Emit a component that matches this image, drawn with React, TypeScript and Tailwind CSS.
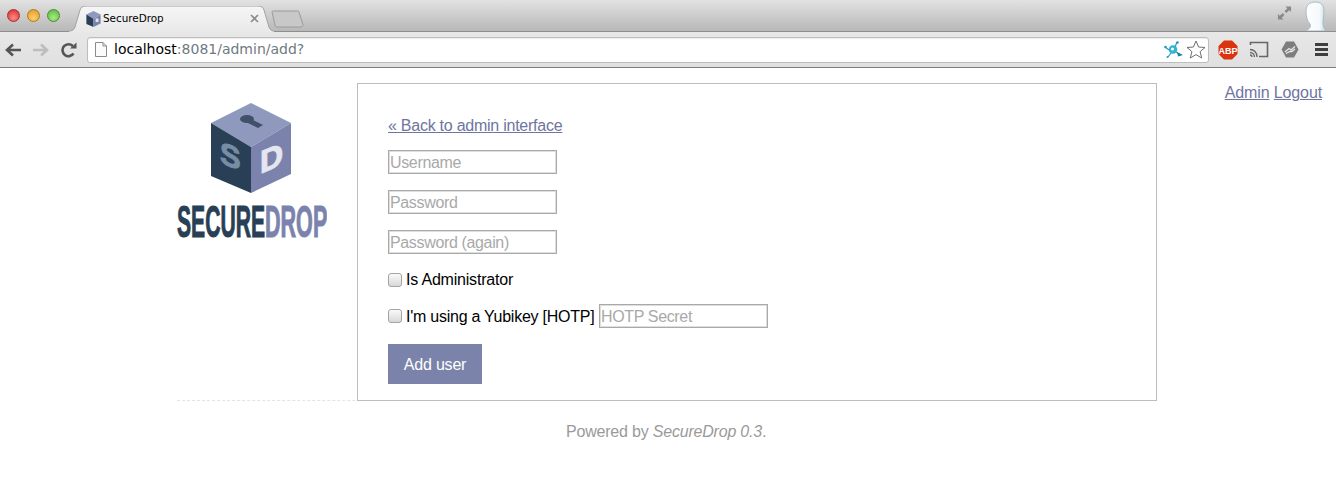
const sans = "font-['Liberation_Sans',Arial,sans-serif]";
const uiFont = "font-['DejaVu_Sans',sans-serif]";
const link = "text-[#6e75a0] underline";
const field =
  "block h-6 w-[169px] border border-[#a9a9a9] bg-white px-[1px] pt-[1px] text-[16px] tracking-[-0.35px] shadow-[inset_0_0_0_1px_#dedede] outline-none placeholder:text-[#a9a9a9]";
const checkbox =
  "h-[14px] w-[14px] rounded-[3px] border border-[#a4a4a4] bg-gradient-to-b from-[#fafafa] to-[#d8d8d8]";

const CubeFaces = () => (
  <>
    <polygon points="40,0 80,20 40,44 0,20" fill="#8f98bd" />
    <polygon points="0,20 40,44 40,90 0,73" fill="#293f55" />
    <polygon points="80,20 40,44 40,90 80,71" fill="#7b83ac" />
  </>
);

const CubeLogo = () => (
  <svg width="80" height="90" viewBox="0 0 80 90" className="mr-[2px]">
    <CubeFaces />
    <ellipse cx="36" cy="16" rx="7" ry="4" fill="#3f5168" />
    <polygon points="38,15 52,22 47,25 37,20" fill="#3f5168" />
    <text
      transform="matrix(1 0.36 0 1 9 60)"
      fontFamily="Liberation Sans"
      fontWeight="700"
      fontSize="31"
      fill="#768da5"
      stroke="#768da5"
      strokeWidth="1"
    >
      S
    </text>
    <text
      transform="matrix(1 -0.42 0 1 49 71)"
      fontFamily="Liberation Sans"
      fontWeight="700"
      fontSize="32"
      fill="#e4e6f0"
      stroke="#e4e6f0"
      strokeWidth="1"
    >
      D
    </text>
  </svg>
);

const WordMark = () => (
  <svg width="150" height="50" viewBox="0 0 150 50" className="mt-[4px]">
    <text
      transform="matrix(0.48 0 0 1 0 40)"
      fontFamily="Liberation Sans"
      fontWeight="700"
      fontSize="44"
      fill="#293f55"
      stroke="#293f55"
      strokeWidth="1.1"
    >
      SECURE
    </text>
    <text
      transform="matrix(0.49 0 0 1 88 40)"
      fontFamily="Liberation Sans"
      fontWeight="700"
      fontSize="44"
      fill="#7b83ac"
      stroke="#7b83ac"
      strokeWidth="1.1"
    >
      DROP
    </text>
  </svg>
);

const Light = ({ className }: { className: string }) => (
  <span className={`h-[13px] w-[13px] rounded-full border ${className}`} />
);

const Tab = () => (
  <div className="relative ml-[9px] flex h-[25px] w-[207px] items-center pl-[17px]">
    <svg className="absolute inset-0" width="207" height="26" viewBox="0 0 207 26">
      <defs>
        <linearGradient id="tabFill" x1="0" y1="0" x2="0" y2="1">
          <stop offset="0" stopColor="#f6f6f6" />
          <stop offset="1" stopColor="#e9e9e9" />
        </linearGradient>
      </defs>
      <path
        d="M0 25C3 25 5 24 6 21L11 4C12 1 14 0 17 0H189C192 0 194 1 195 4L200 21C201 24 203 25 205 25V26H0Z"
        fill="url(#tabFill)"
      />
      <path
        d="M0 25C3 25 5 24 6 21L11 4C12 1 14 0 17 0H189C192 0 194 1 195 4L200 21C201 24 203 25 205 25"
        fill="none"
        stroke="#a2a2a2"
      />
    </svg>
    <svg width="15" height="16" viewBox="0 0 80 90" className="relative shrink-0">
      <CubeFaces />
      <rect x="52" y="42" width="16" height="20" fill="#dfe2ee" />
    </svg>
    <span className={`relative ml-[2px] text-[10.4px] text-black ${uiFont}`}>SecureDrop</span>
    <svg width="9" height="9" viewBox="0 0 9 9" className="relative ml-[86px]">
      <path d="M1 1l7 7M8 1L1 8" stroke="#8a8a8a" strokeWidth="1.6" />
    </svg>
  </div>
);

const NewTab = () => (
  <svg width="33" height="18" viewBox="0 0 33 18" className="mb-[3px] -ml-[5px]">
    <path
      d="M1 2C1 1 2 1 3 1H26C27 1 28 1 28 2L32 15C32 16 31 17 30 17H6C5 17 4 16 4 15Z"
      fill="#c8c8c8"
      stroke="#9b9b9b"
    />
  </svg>
);

const Avatar = () => (
  <svg width="24" height="31" viewBox="0 0 24 31" className="ml-[11px] mr-[9px] self-end">
    <defs>
      <linearGradient id="headFill" x1="0" y1="0" x2="1" y2="0">
        <stop offset="0" stopColor="#ffffff" />
        <stop offset="0.7" stopColor="#f4f9fb" />
        <stop offset="1" stopColor="#c5d8e0" />
      </linearGradient>
    </defs>
    <path
      d="M2 31C7 29 8 27 7 24C4 21 3 16 3 11C3 5 7 2 12 2C18 2 21 5 21 10C21 15 20 19 20 23C20 26 21 29 23 31Z"
      fill="url(#headFill)"
      stroke="#a9bcc5"
    />
  </svg>
);

const ToolbarIcons = () => (
  <div className="flex flex-1 items-center pl-[9px]">
    <svg width="20" height="20" viewBox="0 0 20 20">
      <polygon points="6,0.500 14,0.500 19.500,6 19.500,14 14,19.500 6,19.500 0.500,14 0.500,6" fill="#d9330f" />
      <text x="10" y="13.500" textAnchor="middle" fontSize="9" fontWeight="700" fontFamily="Liberation Sans" fill="#fff">
        ABP
      </text>
    </svg>
    <svg width="20" height="17" viewBox="0 0 20 17" className="ml-[11px]" fill="none" stroke="#666666">
      <path d="M1.500 4V1.500H18.500V15.500H10" strokeWidth="1.6" />
      <path d="M1 8.500C5 8.500 8 11.500 8 16M1 11.500C3.500 11.500 5.500 13.500 5.500 16M1 14C2 14 3 15 3 16" strokeWidth="1.3" />
    </svg>
    <svg width="18" height="17" viewBox="0 0 18 17" className="ml-[12px]">
      <polygon points="5,0.500 13,0.500 17.500,8.500 13,16.500 5,16.500 0.500,8.500" fill="#7d7d7d" />
      <path d="M4 11L8 7.500L10 9L14 5.500M5 12.500L9 10.500L11 10.500L14 8" stroke="#e8e8e8" strokeWidth="1.3" fill="none" />
    </svg>
    <div className="ml-[16px] flex w-[13px] flex-col gap-[2px]">
      <span className="h-[3px] bg-[#3f3f3f]" />
      <span className="h-[3px] bg-[#3f3f3f]" />
      <span className="h-[3px] bg-[#3f3f3f]" />
    </div>
  </div>
);

const NavButtons = () => (
  <div className="flex w-[87px] items-center pl-[5px]">
    <svg width="16" height="14" viewBox="0 0 16 14" fill="none" stroke="#555555" strokeWidth="2.6">
      <path d="M16 7H3M8 1.500L2 7L8 12.500" />
    </svg>
    <svg width="16" height="14" viewBox="0 0 16 14" fill="none" stroke="#bdbdbd" strokeWidth="2.6" className="ml-[12px]">
      <path d="M0 7H13M8 1.500L14 7L8 12.500" />
    </svg>
    <svg width="16" height="16" viewBox="0 0 16 16" className="ml-[12px]">
      <path d="M12.500 11.500A6 6 0 1 1 11.800 4" fill="none" stroke="#555555" strokeWidth="2.6" />
      <polygon points="9,6.500 15.500,6.500 15.500,0.500" fill="#555555" />
    </svg>
  </div>
);

const AddressBar = () => (
  <div className="flex h-[26px] w-[1122px] items-center rounded-[3px] border border-[#bdbdbd] bg-white pl-[7px] pr-[2px] shadow-[inset_0_1px_1px_rgba(0,0,0,0.08)]">
    <svg width="12" height="15" viewBox="0 0 12 15" fill="#fbfbfb" stroke="#8b8b8b">
      <path d="M0.500 0.500H8L11.500 4V14.500H0.500Z" />
      <path d="M8 0.500V4H11.500" fill="none" />
    </svg>
    <span className={`ml-[7px] text-[14px] text-[#6f7a80] ${uiFont}`}>
      <span className="text-black">localhost</span>:8081/admin/add?
    </span>
    <svg width="20" height="17" viewBox="0 0 20 17" className="ml-auto" fill="none">
      <path d="M1 6L5 9M13 1L11 6M4 16L7 12M12 11L17 14" stroke="#2a98b8" strokeWidth="1.2" />
      <circle cx="9" cy="8.500" r="4.300" fill="#34b2d2" />
      <circle cx="8.500" cy="8" r="1.500" fill="#ffffff" />
      <polygon points="13,11 19,14 14,15.500" fill="#1f7f9f" />
      <circle cx="13.500" cy="1.500" r="1.300" fill="#2a98b8" />
      <circle cx="1.500" cy="6" r="1.300" fill="#2a98b8" />
      <circle cx="3.500" cy="16" r="1" fill="#2a98b8" />
    </svg>
    <svg width="20" height="19" viewBox="0 0 20 19" className="ml-[2px]" fill="#ffffff" stroke="#6f6f6f" strokeLinejoin="round">
      <polygon points="10,1 12.600,7 19,7.500 14.100,11.600 15.700,18 10,14.600 4.300,18 5.900,11.600 1,7.500 7.400,7" />
    </svg>
  </div>
);

const BrowserChrome = () => (
  <div className="h-[68px] shrink-0 border-b border-[#7d7d7d] bg-gradient-to-b from-[#eeeeee] to-[#e0e0e0]">
    <div className="flex h-[32px] items-end border-b border-[#8e8e8e] bg-gradient-to-b from-[#e2e2e2] to-[#b8b8b8]">
      <div className="flex items-center gap-[7px] self-start pl-[7px] pt-[9px]">
        <Light className="border-[#a0302c] bg-[radial-gradient(circle_at_50%_70%,#ff8a80,#d7282b)]" />
        <Light className="border-[#b07a1c] bg-[radial-gradient(circle_at_50%_70%,#ffd26b,#e0941e)]" />
        <Light className="border-[#4a8a30] bg-[radial-gradient(circle_at_50%_70%,#a6ec83,#53b53a)]" />
      </div>
      <Tab />
      <NewTab />
      <svg width="15" height="16" viewBox="0 0 16 16" fill="#8a8a8a" className="ml-auto mb-[10px]">
        <polygon points="9,1 15,1 15,7 13,5 10,8 8,6 11,3" />
        <polygon points="1,15 1,9 3,11 6,8 8,10 5,13 7,15" />
      </svg>
      <Avatar />
    </div>
    <div className="flex h-[35px] items-center">
      <NavButtons />
      <AddressBar />
      <ToolbarIcons />
    </div>
  </div>
);

export default function App() {
  return (
    <div className={`flex h-[477px] w-[1336px] flex-col overflow-hidden bg-white text-[16px] text-black ${sans}`}>
      <BrowserChrome />
      <div className="relative flex-1">
        <div className="absolute right-[14px] top-[13px] tracking-[-0.12px]">
          <a className={link}>Admin</a> <a className={link}>Logout</a>
        </div>
        <div className="ml-[177px] flex h-[333px] w-[980px] border-b border-dashed border-[#e4e4e4] pt-[15px]">
          <div className="w-[180px] shrink-0 pt-[20px]">
            <div className="flex w-[150px] flex-col items-center">
              <CubeLogo />
              <WordMark />
            </div>
          </div>
          <div className="-mb-px h-[318px] w-[800px] border border-[#bdbdbd] bg-white px-[30px] pt-[32px] tracking-[-0.25px]">
            <a className={`${link} block leading-[20px]`}>« Back to admin interface</a>
            <input className={`${field} mt-[14px]`} placeholder="Username" />
            <input className={`${field} mt-[16px]`} placeholder="Password" />
            <input className={`${field} mt-[16px]`} placeholder="Password (again)" />
            <label className="mt-[16px] flex h-[20px] items-center">
              <span className={checkbox} />
              <span className="ml-[4px] tracking-[-0.2px]">Is Administrator</span>
            </label>
            <div className="mt-[14px] flex h-[24px] items-center">
              <span className={checkbox} />
              <span className="ml-[4px] mt-[2px] w-[188px] whitespace-nowrap tracking-[-0.25px]">I'm using a Yubikey [HOTP]</span>
              <input className={`${field} ml-[5px]`} placeholder="HOTP Secret" />
            </div>
            <button className="mt-[16px] h-[40px] w-[94px] bg-[#7b83ab] pt-[2px] tracking-[-0.2px] text-white">
              Add user
            </button>
          </div>
        </div>
        <p className="mt-[19px] ml-[566px] tracking-[-0.2px] text-[#9a9a9a]">
          Powered by <em>SecureDrop 0.3</em>.
        </p>
      </div>
    </div>
  );
}
